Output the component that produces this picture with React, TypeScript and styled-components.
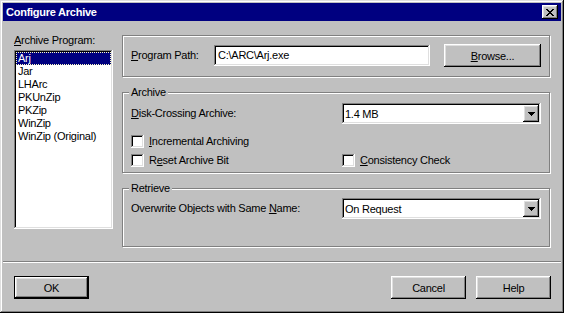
import React from 'react';
import styled, {createGlobalStyle} from 'styled-components';

const programs = ['Arj', 'Jar', 'LHArc', 'PKUnZip', 'PKZip', 'WinZip', 'WinZip (Original)'];

export default function App() {
  return (
    <>
      <GlobalStyle/>
      <Window>
        <TitleBar>
          <Title>Configure Archive</Title>
          <CloseButton aria-label="Close">
            <CloseGlyph/>
          </CloseButton>
        </TitleBar>

        <Body>
          <ProgramColumn>
            <Label><u>A</u>rchive Program:</Label>
            <ListBox>
              {programs.map((name, index) => (
                <ListItem key={name} $selected={index === 0}>{name}</ListItem>
              ))}
            </ListBox>
          </ProgramColumn>

          <SettingsColumn>
            <PathGroup>
              <Label><u>P</u>rogram Path:</Label>
              <TextField>{'C:\\ARC\\Arj.exe'}</TextField>
              <Button $wide><u>B</u>rowse...</Button>
            </PathGroup>

            <GroupBox $bottom={4}>
              <GroupTitle>Archive</GroupTitle>
              <FormGrid>
                <Label $top={4}><u>D</u>isk-Crossing Archive:</Label>
                <ComboBox $top={4}>
                  <span>1.4 MB</span>
                  <DropButton><DownArrow/></DropButton>
                </ComboBox>
                <Check $top={9}>
                  <CheckBox/>
                  <span><u>I</u>ncremental Archiving</span>
                </Check>
                <span/>
                <Check $top={3}>
                  <CheckBox/>
                  <span>R<u>e</u>set Archive Bit</span>
                </Check>
                <Check $top={3}>
                  <CheckBox/>
                  <span><u>C</u>onsistency Check</span>
                </Check>
              </FormGrid>
            </GroupBox>

            <GroupBox $bottom={27}>
              <GroupTitle>Retrieve</GroupTitle>
              <FormGrid>
                <Label $top={3}>Overwrite Objects with Same <u>N</u>ame:</Label>
                <ComboBox $top={3}>
                  <span>On Request</span>
                  <DropButton><DownArrow/></DropButton>
                </ComboBox>
              </FormGrid>
            </GroupBox>
          </SettingsColumn>
        </Body>

        <Separator/>

        <Footer>
          <Button $default>OK</Button>
          <Button $push>Cancel</Button>
          <Button>Help</Button>
        </Footer>
      </Window>
    </>
  );
}

function CloseGlyph() {
  return (
    <svg width="8" height="7" viewBox="0 0 8 7" shapeRendering="crispEdges">
      <path
        fill="#000"
        d="M0 0h2v1H0zM6 0h2v1H6zM1 1h2v1H1zM5 1h2v1H5zM2 2h4v1H2zM3 3h2v1H3zM2 4h4v1H2zM1 5h2v1H1zM5 5h2v1H5zM0 6h2v1H0zM6 6h2v1H6z"
      />
    </svg>
  );
}

function DownArrow() {
  return (
    <svg width="7" height="4" viewBox="0 0 7 4" shapeRendering="crispEdges">
      <path fill="#000" d="M0 0h7v1H0zM1 1h5v1H1zM2 2h3v1H2zM3 3h1v1H3z"/>
    </svg>
  );
}

const raised = `
  box-shadow: inset -1px -1px #000, inset 1px 1px #fff, inset -2px -2px #808080, inset 2px 2px #dfdfdf;
`;

const sunken = `
  box-shadow: inset -1px -1px #fff, inset 1px 1px #808080, inset -2px -2px #dfdfdf, inset 2px 2px #000;
`;

const etched = `
  border: 1px solid #808080;
  box-shadow: inset 1px 1px #fff, 1px 1px #fff;
`;

const GlobalStyle = createGlobalStyle`
  body {
    margin: 0;
    background: #c0c0c0;
    font-family: "Liberation Sans", Arial, sans-serif;
    font-size: 11px;
    letter-spacing: -0.25px;
    color: #000;
  }
  u {
    text-decoration-thickness: 1px;
    text-underline-offset: 1px;
  }
`;

const Window = styled.div`
  width: 564px;
  height: 313px;
  box-sizing: border-box;
  padding: 3px;
  display: flex;
  flex-direction: column;
  background: #c0c0c0;
  box-shadow: inset -1px -1px #000, inset 1px 1px #dfdfdf, inset -2px -2px #808080, inset 2px 2px #fff;
`;

const TitleBar = styled.div`
  height: 18px;
  display: flex;
  align-items: center;
  padding: 0 3px;
  background: #000080;
`;

const Title = styled.div`
  flex: 1;
  color: #fff;
  font-weight: bold;
  line-height: 18px;
`;

const CloseButton = styled.button`
  width: 16px;
  height: 14px;
  padding: 0;
  border: 0;
  background: #c0c0c0;
  display: flex;
  align-items: center;
  justify-content: center;
  ${raised}
`;

const Body = styled.div`
  height: 240px;
  box-sizing: border-box;
  display: flex;
  gap: 9px;
  padding: 13px 11px 0;
`;

const ProgramColumn = styled.div`
  width: 99px;
  display: flex;
  flex-direction: column;
`;

const Label = styled.div<{ $top?: number }>`
  line-height: 13px;
  white-space: nowrap;
  margin-top: ${p => p.$top ?? 0}px;
`;

const ListBox = styled.div`
  margin-top: 3px;
  height: 179px;
  box-sizing: border-box;
  padding: 2px;
  background: #fff;
  overflow: hidden;
  ${sunken}
`;

const ListItem = styled.div<{ $selected?: boolean }>`
  height: 13px;
  line-height: 13px;
  padding-left: 2px;
  white-space: nowrap;
  background: ${p => (p.$selected ? '#000080' : 'transparent')};
  color: ${p => (p.$selected ? '#fff' : '#000')};
  outline: ${p => (p.$selected ? '1px dotted #ffffc0' : 'none')};
  outline-offset: -1px;
`;

const SettingsColumn = styled.div`
  width: 428px;
  margin-top: 1px;
  display: flex;
  flex-direction: column;
  gap: 15px;
`;

const PathGroup = styled.div`
  ${etched}
  padding: 8px 8px 9px;
  display: grid;
  grid-template-columns: 83px 216px 1fr;
  align-items: center;
  justify-items: start;
`;

const GroupBox = styled.div<{ $bottom: number }>`
  ${etched}
  padding: 0 8px ${p => p.$bottom}px;
`;

const GroupTitle = styled.div`
  width: fit-content;
  margin: -8px 0 0 -2px;
  padding: 0 2px;
  line-height: 14px;
  background: #c0c0c0;
`;

const FormGrid = styled.div`
  display: grid;
  grid-template-columns: 211px 199px;
  align-items: center;
`;

const TextField = styled.div`
  width: 216px;
  height: 21px;
  box-sizing: border-box;
  padding: 0 4px;
  line-height: 21px;
  background: #fff;
  white-space: nowrap;
  ${sunken}
`;

const ComboBox = styled.div<{ $top?: number }>`
  height: 21px;
  box-sizing: border-box;
  margin-top: ${p => p.$top ?? 0}px;
  padding: 2px 2px 2px 3px;
  display: flex;
  align-items: center;
  background: #fff;
  ${sunken}
`;

const DropButton = styled.div`
  margin-left: auto;
  width: 16px;
  height: 17px;
  display: flex;
  align-items: center;
  justify-content: center;
  background: #c0c0c0;
  ${raised}
`;

const Check = styled.label<{ $top?: number }>`
  height: 16px;
  margin-top: ${p => p.$top ?? 0}px;
  display: flex;
  align-items: center;
  gap: 5px;
  white-space: nowrap;
`;

const CheckBox = styled.span`
  width: 13px;
  height: 13px;
  flex: none;
  background: #fff;
  ${sunken}
`;

const Button = styled.button<{ $default?: boolean; $wide?: boolean; $push?: boolean }>`
  width: ${p => (p.$wide ? 97 : 75)}px;
  height: 23px;
  box-sizing: border-box;
  padding: 0;
  margin-left: ${p => (p.$push ? 'auto' : '0')};
  justify-self: ${p => (p.$wide ? 'end' : 'auto')};
  border: ${p => (p.$default ? '1px solid #000' : '0')};
  background: #c0c0c0;
  font: inherit;
  letter-spacing: inherit;
  color: #000;
  ${raised}
`;

const Separator = styled.div`
  height: 2px;
  box-sizing: border-box;
  border-top: 1px solid #808080;
  border-bottom: 1px solid #fff;
`;

const Footer = styled.div`
  height: 47px;
  box-sizing: border-box;
  display: flex;
  gap: 10px;
  padding: 13px 10px 0 11px;
`;
